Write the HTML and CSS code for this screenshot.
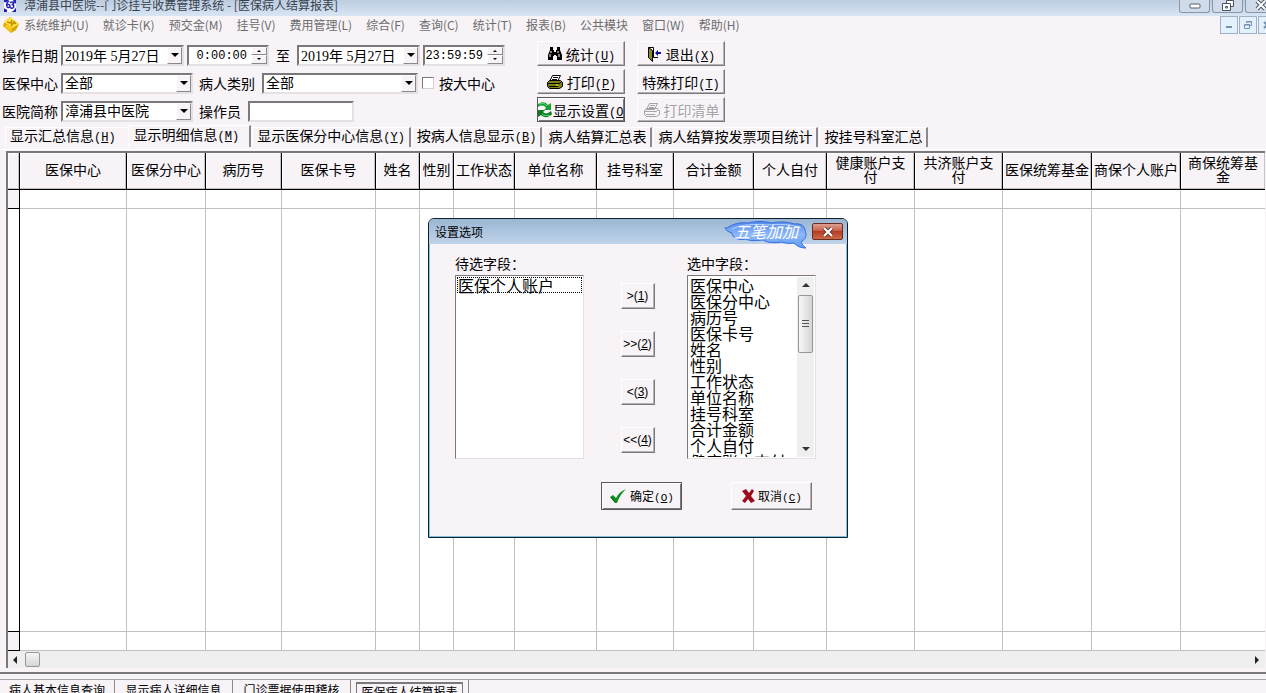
FILE: index.html
```html
<!DOCTYPE html>
<html lang="zh-CN">
<head>
  <meta charset="UTF-8">
  <meta name="viewport" content="width=device-width, initial-scale=1.0">
  <title>漳浦县中医院--门诊挂号收费管理系统</title>
  <link rel="stylesheet" href="styles.css">
</head>
<body>
  <div class="app">
    <header class="titlebar">
      <svg class="app-icon" width="16" height="16" viewBox="0 0 16 16">
        <rect width="16" height="16" fill="#fff"/>
        <path d="M0 0h6L4 3H0zM12 0h4v5l-3-2zM0 11l4 2v3H0zM16 10v6h-6l3-2z" fill="#2222b8"/>
        <path d="M7 1C4 3 3 6 4 9c1 2 4 1 4-1S5 5 4 7M8 4c1-2 5-2 5 0s-3 2-3 2 4 0 3 3-5 2-5 0" fill="none" stroke="#2222b8" stroke-width="2"/>
      </svg>
      <span class="titlebar-text">漳浦县中医院--门诊挂号收费管理系统 - [医保病人结算报表]</span>
      <div class="win-buttons">
        <button aria-label="最小化"><svg width="12" height="12" viewBox="0 0 12 12"><rect x="1" y="4" width="10" height="4" rx="1" fill="#fff" stroke="#555e6a"/></svg></button>
        <button aria-label="还原"><svg width="12" height="12" viewBox="0 0 12 12" fill="#fff" stroke="#4b5360"><path d="M4.500 0.500h7v6h-7z"/><path d="M.5 3.500h8v7h-8z"/><path d="M3.500 6.500h2v1.500h-2z"/></svg></button>
        <button aria-label="关闭"><svg width="12" height="12" viewBox="0 0 12 12"><path d="M2 1l8 8M10 1l-8 8" stroke="#4b5360" stroke-width="4"/><path d="M2 1l8 8M10 1l-8 8" stroke="#fff" stroke-width="2"/></svg></button>
      </div>
    </header>

    <nav class="menubar">
      <svg class="menu-icon" width="18" height="18" viewBox="0 0 18 18">
        <path d="M8 1l9 7-3 6-5 3-8-7 2-5z" fill="#d9a400"/>
        <path d="M8 1l9 7-7 4-8-6z" fill="#ffe34a"/>
        <path d="M5 6l4 1 1-3M9 10l3-4 2 2" fill="none" stroke="#c28a00" stroke-width="1.500"/>
        <path d="M2 11l3-3 5 4-1 5z" fill="#f7c61c"/>
      </svg>
      <a href="#">系统维护(U)</a>
      <a href="#">就诊卡(K)</a>
      <a href="#">预交金(M)</a>
      <a href="#">挂号(V)</a>
      <a href="#">费用管理(L)</a>
      <a href="#">综合(F)</a>
      <a href="#">查询(C)</a>
      <a href="#">统计(T)</a>
      <a href="#">报表(B)</a>
      <a href="#">公共模块</a>
      <a href="#">窗口(W)</a>
      <a href="#">帮助(H)</a>
      <div class="child-buttons">
        <button aria-label="最小化窗口"><svg width="10" height="10" viewBox="0 0 10 10"><path d="M2 7h6" stroke="#7592ae" stroke-width="2"/></svg></button>
        <button aria-label="还原窗口"><svg width="10" height="10" viewBox="0 0 10 10" fill="none" stroke="#7592ae"><path d="M3.500 3V1.500h5v4H7M1.500 4.500h5v4h-5zM3 2h6M1 5h6"/></svg></button>
        <button aria-label="关闭窗口"><svg width="10" height="10" viewBox="0 0 10 10"><path d="M2 2l6 6M8 2l-6 6" stroke="#7592ae" stroke-width="2"/></svg></button>
      </div>
    </nav>

    <section class="toolbar">
      <div class="filters">
        <div class="filter-row">
          <label class="row-label" for="dateFrom">操作日期</label>
          <div class="combo date">
            <input type="text" id="dateFrom" value="2019年 5月27日">
            <button class="drop" aria-label="选择开始日期"></button>
          </div>
          <div class="combo time">
            <input type="text" value="0:00:00" aria-label="开始时间">
            <div class="spin"><button aria-label="增加"></button><button aria-label="减少"></button></div>
          </div>
          <label class="to" for="dateTo">至</label>
          <div class="combo date">
            <input type="text" id="dateTo" value="2019年 5月27日">
            <button class="drop" aria-label="选择结束日期"></button>
          </div>
          <div class="combo time">
            <input type="text" value="23:59:59" aria-label="结束时间">
            <div class="spin"><button aria-label="增加"></button><button aria-label="减少"></button></div>
          </div>
        </div>
        <div class="filter-row">
          <label class="row-label" for="center">医保中心</label>
          <div class="combo medium">
            <select id="center"><option>全部</option></select>
            <span class="drop"></span>
          </div>
          <label class="second-label" for="ptype">病人类别</label>
          <div class="combo wide">
            <select id="ptype"><option>全部</option></select>
            <span class="drop"></span>
          </div>
          <input type="checkbox" id="bigCenter">
          <label for="bigCenter">按大中心</label>
        </div>
        <div class="filter-row">
          <label class="row-label" for="hospital">医院简称</label>
          <div class="combo medium">
            <select id="hospital"><option>漳浦县中医院</option></select>
            <span class="drop"></span>
          </div>
          <label class="second-label" for="operator">操作员</label>
          <div class="combo operator"><input type="text" id="operator"></div>
        </div>
      </div>

      <div class="actions">
        <button class="btn">
          <svg width="16" height="16" viewBox="0 0 16 16"><path d="M3 1h3v3h1v2h2V4h1V1h3v3l2 5v5h-5v-4H9V9H7v1H6v4H1V9l2-5z"/><path d="M4 5v2M3 8v3M11 5v2M12 8v3" stroke="#fff"/></svg>
          <span>统计<span class="key">(<u>U</u>)</span></span>
        </button>
        <button class="btn">
          <svg width="16" height="16" viewBox="0 0 16 16"><path d="M1.500 1.500h5v10h-5z" fill="#fff" stroke="#000"/><path d="M1.500 1.500l4 3v11l-4-4z" fill="#8c8c10" stroke="#000"/><path d="M7 11.500h4" stroke="#000"/><path d="M8 7l3-3v2h3v2h-3v2z" fill="#1010a0"/></svg>
          <span>退出<span class="key">(<u>X</u>)</span></span>
        </button>
        <button class="btn">
          <svg width="18" height="16" viewBox="0 0 18 16"><path d="M6.500 1.500h8l-3 6h-8z" fill="#fff" stroke="#000"/><path d="M7 3.500h5M6 5.500h5" stroke="#000"/><path d="M1.500 8.500l2-2h11l2 2v4l-3 2h-10l-2-2z" fill="#80801a" stroke="#000"/><path d="M2 9.500h11l3-2M3 12.500h9" fill="none" stroke="#000"/><path d="M10 11h2" stroke="#ff0"/></svg>
          <span>打印<span class="key">(<u>P</u>)</span></span>
        </button>
        <button class="btn"><span>特殊打印<span class="key">(<u>T</u>)</span></span></button>
        <button class="btn default settings">
          <svg width="14" height="18" viewBox="0 0 14 18"><path d="M0 3c4-3 8-2 10 1l3-2v7H6l2-2C6 4 3 4 0 6z" fill="#18a030"/><path d="M14 13c-3 4-8 4-11 1l-3 2V9h7l-2 2c2 2 5 2 8-1z" fill="#0b7b22"/><path d="M1 3c3-1 6-1 8 2M4 13c2 2 5 2 8 1" fill="none" stroke="#6be07c"/></svg>
          <span>显示设置<span class="key">(<u>O</u>)</span></span>
        </button>
        <button class="btn" disabled>
          <svg width="18" height="16" viewBox="0 0 18 16" fill="none" stroke="#a5a2a5"><path d="M6.500 1.500h8l-3 6h-8zM7 3.500h5M6 5.500h5M1.500 8.500l2-2h11l2 2v4l-3 2h-10l-2-2zM2 9.500h11l3-2M3 12.500h9"/></svg>
          <span>打印清单</span>
        </button>
      </div>
    </section>

    <div class="tabs" role="tablist">
      <button class="tab first" role="tab">显示汇总信息<span class="key">(<u>H</u>)</span></button>
      <button class="tab active" role="tab" aria-selected="true">显示明细信息<span class="key">(<u>M</u>)</span></button>
      <button class="tab" role="tab">显示医保分中心信息<span class="key">(<u>Y</u>)</span></button>
      <button class="tab" role="tab">按病人信息显示<span class="key">(<u>B</u>)</span></button>
      <button class="tab" role="tab">病人结算汇总表</button>
      <button class="tab" role="tab">病人结算按发票项目统计</button>
      <button class="tab" role="tab">按挂号科室汇总</button>
    </div>

    <main class="sheet">
      <div class="grid-frame">
        <div class="grid-body">
          <table class="grid">
            <colgroup>
              <col class="w-mark"><col class="w-center"><col class="w-sub"><col class="w-record"><col class="w-card">
              <col class="w-name"><col class="w-sex"><col class="w-status"><col class="w-unit"><col class="w-dept">
              <col class="w-total"><col class="w-self"><col class="w-account"><col class="w-account"><col class="w-fund"><col class="w-fund"><col>
            </colgroup>
            <thead>
              <tr>
                <th></th><th>医保中心</th><th>医保分中心</th><th>病历号</th><th>医保卡号</th><th>姓名</th><th>性别</th><th>工作状态</th><th>单位名称</th><th>挂号科室</th><th>合计金额</th><th>个人自付</th><th class="wrap">健康账户支付</th><th class="wrap">共济账户支付</th><th>医保统筹基金</th><th>商保个人账户</th><th class="wrap">商保统筹基金</th>
              </tr>
            </thead>
            <tbody>
              <tr class="line"><td></td><td></td><td></td><td></td><td></td><td></td><td></td><td></td><td></td><td></td><td></td><td></td><td></td><td></td><td></td><td></td><td></td></tr>
              <tr class="space"><td></td><td></td><td></td><td></td><td></td><td></td><td></td><td></td><td></td><td></td><td></td><td></td><td></td><td></td><td></td><td></td><td></td></tr>
              <tr class="line"><td></td><td></td><td></td><td></td><td></td><td></td><td></td><td></td><td></td><td></td><td></td><td></td><td></td><td></td><td></td><td></td><td></td></tr>
            </tbody>
          </table>
        </div>
        <div class="hscroll">
          <span class="arrow-left"></span>
          <span class="hthumb"></span>
          <span class="arrow-right"></span>
        </div>
      </div>
    </main>

    <footer class="windows">
      <button>病人基本信息查询</button>
      <button>显示病人详细信息</button>
      <button>门诊票据使用稽核</button>
      <button class="current"><span>医保病人结算报表</span></button>
    </footer>
  </div>

  <div class="dialog" role="dialog" aria-labelledby="dialogTitle">
    <div class="dialog-title">
      <span id="dialogTitle">设置选项</span>
      <svg class="ime" width="86" height="28" viewBox="0 0 86 28">
        <defs><linearGradient id="imeFill" x1="0" y1="0" x2="0" y2="1"><stop offset="0" stop-color="#5689e8"/><stop offset="0.500" stop-color="#8eb8fa"/><stop offset="1" stop-color="#5c9bf5"/></linearGradient></defs>
        <path d="M4 7C9 3 17 1 25 2c8-2 16-2 24 0 9-2 17-1 22 1 6-1 11 2 11 6 2 5 1 9-3 11-2 2 2 5 4 7-6 0-9-2-12-5-5 1-9 0-12-1-8 1-14 1-19-2-7 1-14 1-17-1-8 2-14-2-14-6-4-1-6-3-7-5 0-1 1 0 2 0z" fill="url(#imeFill)" stroke="#346ee0"/>
        <path d="M9 8c10-5 24-5 35-4 12-1 25-1 34 3" fill="none" stroke="#b6d2ff"/>
        <text class="ime-text" x="11" y="17">五笔加加</text>
      </svg>
      <button class="close" aria-label="关闭"><svg width="12" height="10" viewBox="0 0 12 10"><path d="M2 1l8 8M10 1L2 9" stroke="#6a4038" stroke-width="4"/><path d="M2 1l8 8M10 1L2 9" stroke="#fff" stroke-width="2"/></svg></button>
    </div>
    <div class="dialog-body">
      <div class="picker">
        <div class="picker-col">
          <label for="available">待选字段：</label>
          <div class="listbox">
            <select id="available" size="11"><option class="focused">医保个人账户</option></select>
          </div>
        </div>
        <div class="movers">
          <button class="btn">&gt;(<u>1</u>)</button>
          <button class="btn">&gt;&gt;(<u>2</u>)</button>
          <button class="btn">&lt;(<u>3</u>)</button>
          <button class="btn">&lt;&lt;(<u>4</u>)</button>
        </div>
        <div class="picker-col">
          <label for="chosen">选中字段：</label>
          <div class="listbox">
            <select id="chosen" size="11">
              <option>医保中心</option>
              <option>医保分中心</option>
              <option>病历号</option>
              <option>医保卡号</option>
              <option>姓名</option>
              <option>性别</option>
              <option>工作状态</option>
              <option>单位名称</option>
              <option>挂号科室</option>
              <option>合计金额</option>
              <option>个人自付</option>
              <option>健康账户支付</option>
            </select>
            <div class="vscroll">
              <span class="arrow-up"></span>
              <span class="vthumb"><i></i></span>
              <span class="arrow-down"></span>
            </div>
          </div>
        </div>
      </div>
      <div class="dialog-buttons">
        <button class="btn default">
          <svg width="18" height="16" viewBox="0 0 18 16"><path d="M1 9l3-2 3 3C9 6 12 3 17 1c-4 4-7 8-9 14H6z" fill="#109020"/><path d="M2 9l4 5" stroke="#066010"/></svg>
          <span>确定<span class="key">(<u>O</u>)</span></span>
        </button>
        <button class="btn">
          <svg width="14" height="16" viewBox="0 0 14 16"><path d="M1 3l4-2 3 4 3-4 2 2-3 5 4 5-4 2-3-4-3 4-3-2 4-5z" fill="#9c0d1c"/></svg>
          <span>取消<span class="key">(<u>C</u>)</span></span>
        </button>
      </div>
    </div>
  </div>
</body>
</html>
```

FILE: styles.css
```css
* {
  box-sizing: border-box;
}
body {
  margin: 0;
  overflow: hidden;
  background: #f7f3f7;
  color: #000;
  font-family: "Liberation Serif", "Noto Sans CJK SC", sans-serif;
  font-size: 14px;
}
button, input, select {
  margin: 0;
  padding: 0;
  border: none;
  border-radius: 0;
  background: none;
  color: inherit;
  font: inherit;
}
.app {
  display: flex;
  flex-direction: column;
  height: 100vh;
}
.key {
  font-family: "Liberation Mono", monospace;
  font-size: 12px;
}

/* title bar */
.titlebar {
  display: flex;
  flex: none;
  height: 16px;
  padding-left: 2px;
  background: linear-gradient(#bccde0, #d8e5f3);
  font-family: "Noto Sans CJK SC", sans-serif;
  font-size: 12px;
  color: #39424c;
}
.app-icon {
  height: 12px;
}
.titlebar-text {
  flex: 1;
  padding-left: 6px;
  line-height: 10px;
  white-space: nowrap;
}
.win-buttons {
  display: flex;
  gap: 2px;
  margin-right: -10px;
}
.win-buttons button {
  display: flex;
  justify-content: center;
  width: 31px;
  height: 13px;
  border: 1px solid #8896a8;
  border-top: none;
  border-radius: 0 0 3px 3px;
  background: #cfdbe9;
}

/* menu */
.menubar {
  display: flex;
  flex: none;
  align-items: center;
  gap: 14px;
  height: 18px;
  padding-left: 2px;
  font-family: "Noto Sans CJK SC", sans-serif;
  font-size: 12px;
  line-height: 18px;
}
.menubar a {
  color: #6d6d6d;
  text-decoration: none;
  white-space: nowrap;
}
.menu-icon {
  margin-right: -10px;
}
.child-buttons {
  display: flex;
  gap: 1px;
  margin: 0 -10px 0 auto;
}
.child-buttons button {
  display: flex;
  align-items: center;
  justify-content: center;
  width: 18px;
  height: 18px;
  border: 1px solid #9db2c6;
  background: #e3f1fc;
}

/* filters */
.toolbar {
  display: flex;
  flex: none;
  padding: 7px 0 0 2px;
}
.filters {
  width: 535px;
}
.filter-row {
  display: flex;
  align-items: center;
  height: 28px;
  white-space: nowrap;
}
.row-label {
  width: 59px;
}
.second-label {
  padding: 0 7px 0 6px;
}
.combo {
  display: flex;
  height: 21px;
  border: 2px solid;
  border-color: #7b787b #e4e0e4 #e4e0e4 #7b787b;
  background: #fff;
}
.combo input, .combo select {
  flex: 1;
  min-width: 0;
  padding-left: 2px;
  appearance: none;
  outline: none;
}
.date {
  width: 123px;
  margin-right: 3px;
}
.time {
  width: 82px;
}
.combo.time input {
  padding: 2px 4px 0 0;
  font-family: "Liberation Mono", monospace;
  font-size: 12px;
  text-align: right;
}
.to {
  padding: 0 7px;
}
.medium {
  width: 132px;
}
.wide {
  width: 156px;
}
.operator {
  width: 106px;
}
.drop {
  display: flex;
  align-items: center;
  justify-content: center;
  width: 15px;
  border: 1px solid;
  border-color: #fff #8c888c #8c888c #fff;
  background: #f7f3f7;
}
.drop::before {
  content: "";
  border: 4px solid transparent;
  border-top-color: #000;
  border-bottom: none;
}
.spin {
  display: flex;
  flex-direction: column;
  width: 16px;
}
.spin button {
  display: flex;
  flex: 1;
  align-items: center;
  justify-content: center;
  border: 1px solid;
  border-color: #fff #8c888c #8c888c #fff;
  background: #f7f3f7;
}
.spin button::before {
  content: "";
  border: 2px solid transparent;
  border-bottom-color: #000;
  border-top: none;
}
.spin button:last-child::before {
  border: 2px solid transparent;
  border-top-color: #000;
  border-bottom: none;
}
input[type="checkbox"] {
  width: 12px;
  height: 12px;
  margin: 0 5px 0 4px;
  appearance: none;
  border: 1px solid;
  border-color: #7b787b #d4d0d4 #d4d0d4 #7b787b;
  background: #fff;
}

/* buttons */
.btn {
  display: flex;
  align-items: center;
  justify-content: center;
  gap: 3px;
  border: 1px solid;
  border-color: #fff #7b787b #7b787b #fff;
  box-shadow: inset -1px -1px #b5b2b5;
  white-space: nowrap;
}
.btn svg {
  flex: none;
}
.btn:disabled {
  color: #a5a2a5;
  text-shadow: 1px 1px #fff;
}
.btn.default {
  border-color: #5a575a;
  box-shadow: inset 1px 1px #fff, inset -1px -1px #7b787b;
}
.actions {
  display: grid;
  grid-template-columns: 88px 88px;
  grid-auto-rows: 25px;
  gap: 3px 12px;
}
.btn.settings {
  justify-content: flex-start;
  gap: 1px;
  overflow: hidden;
}

/* page tabs */
.tabs {
  display: flex;
  flex: none;
  height: 24px;
  padding: 2px 0 0 5px;
}
.tab {
  height: 20px;
  margin-right: 1px;
  padding: 0 4px 0 4px;
  border-top: 1px solid #fff;
  border-left: 1px solid #fff;
  border-right: 2px solid #8c888c;
  line-height: 18px;
  white-space: nowrap;
}
.tab.first {
  padding-right: 11px;
  border-right: none;
}
.tab.active {
  height: 22px;
  margin-top: -2px;
  padding: 0 10px 0 5px;
}

/* data grid */
.sheet {
  display: flex;
  flex: 1;
  min-height: 0;
  padding: 1px 0 4px 6px;
  border-top: 1px solid #fff;
  border-bottom: 2px solid #7b787b;
}
.grid-frame {
  display: flex;
  flex: 1;
  flex-direction: column;
  margin-right: 1px;
  border-top: 2px solid #7b787b;
  border-left: 2px solid #7b787b;
  background: #fff;
}
.grid-body {
  flex: 1;
  min-height: 0;
}
.grid {
  width: 100%;
  height: 100%;
  table-layout: fixed;
  border-spacing: 0;
}
.grid th {
  height: 37px;
  padding: 0;
  border-right: 1px solid #000;
  border-bottom: 1px solid #000;
  background: #f7f3f7;
  box-shadow: inset -1px -1px #c6c3c6, inset 1px 1px #fff;
  font-weight: normal;
  line-height: 14px;
}
.grid th.wrap {
  padding: 0 6px;
}
.grid td {
  padding: 0;
  border-right: 1px solid #c0c0c0;
  border-bottom: 1px solid #c0c0c0;
}
.grid th:last-child, .grid td:last-child {
  border-right: none;
}
.grid td:first-child {
  border-right-color: #000;
  border-bottom-color: #000;
}
.line td {
  height: 19px;
}
.line td:first-child {
  background: #f7f3f7;
}
.w-mark { width: 12px; }
.w-center { width: 107px; }
.w-sub { width: 79px; }
.w-record { width: 76px; }
.w-card { width: 94px; }
.w-name { width: 44px; }
.w-sex { width: 34px; }
.w-status { width: 61px; }
.w-unit { width: 82px; }
.w-dept { width: 77px; }
.w-total { width: 80px; }
.w-self { width: 73px; }
.w-account { width: 88px; }
.w-fund { width: 89px; }
.hscroll {
  display: flex;
  align-items: center;
  height: 17px;
  padding: 0 6px 0 5px;
  background: #f0eff0;
}
.arrow-left, .arrow-right {
  border: 4px solid transparent;
}
.arrow-left {
  border-left: none;
  border-right-color: #222;
}
.arrow-right {
  margin-left: auto;
  border-right: none;
  border-left-color: #222;
}
.hthumb {
  width: 15px;
  height: 15px;
  margin-left: 8px;
  border: 1px solid #979797;
  border-radius: 2px;
  background: linear-gradient(#f6f6f6, #d5d5d5);
}

/* open windows */
.windows {
  display: flex;
  flex: none;
  height: 14px;
  margin-top: 5px;
  border-top: 1px solid #a5a2a5;
  overflow: hidden;
  font-family: "Noto Sans CJK SC", sans-serif;
  font-size: 12px;
  line-height: 18px;
}
.windows button {
  width: 118px;
  height: 20px;
  border-right: 1px solid #8c888c;
}
.windows button:first-child {
  width: 115px;
}
.windows .current {
  padding: 1px 5px 0;
}
.current span {
  display: block;
  border: 1px solid #7b787b;
  border-top-width: 2px;
  border-bottom: none;
  line-height: 16px;
}

/* settings dialog */
.dialog {
  position: absolute;
  left: 428px;
  top: 218px;
  width: 420px;
  border: 1px solid #10202c;
  border-radius: 6px 6px 0 0;
  background: #f7f3f7;
  box-shadow: inset 0 0 0 1px #7cc3dd;
}
.dialog-title {
  display: flex;
  align-items: center;
  height: 25px;
  padding: 0 4px 0 6px;
  border-radius: 5px 5px 0 0;
  background: linear-gradient(#9bb6d3, #bfd3e9);
  font-family: "Noto Sans CJK SC", sans-serif;
  font-size: 12px;
}
.ime {
  flex: none;
  margin: 6px 3px 0 auto;
}
.ime-text {
  fill: #fff;
  font-size: 16px;
  font-style: italic;
}
.close {
  display: flex;
  align-items: center;
  justify-content: center;
  width: 31px;
  height: 17px;
  border: 1px solid #6b2b25;
  border-radius: 2px;
  background: linear-gradient(#dda093, #c9604a 45%, #b53a22 50%, #cd6a48);
}
.dialog-body {
  padding: 10px 31px 27px 26px;
}
.picker {
  display: flex;
  justify-content: space-between;
}
.picker-col label {
  display: block;
  height: 21px;
  line-height: 21px;
}
.listbox {
  display: flex;
  width: 129px;
  height: 184px;
  padding: 1px;
  border: 1px solid;
  border-color: #7b787b #e4e0e4 #e4e0e4 #7b787b;
  background: #fff;
  font-size: 16px;
}
.listbox select {
  flex: 1;
  min-width: 0;
  height: 180px;
  outline: none;
  overflow: hidden;
}
.listbox option {
  display: flex;
  align-items: center;
  height: 16px;
  min-height: 16px;
  padding: 0 1px;
  line-height: 16px;
}
.listbox .focused {
  outline: 1px dotted #000;
  outline-offset: -1px;
}
.vscroll {
  display: flex;
  flex-direction: column;
  align-items: center;
  width: 17px;
  padding: 6px 0;
  background: #f0eff0;
}
.arrow-up, .arrow-down {
  border: 4px solid transparent;
}
.arrow-up {
  border-top: none;
  border-bottom-color: #333;
}
.arrow-down {
  margin-top: auto;
  border-bottom: none;
  border-top-color: #333;
}
.vthumb {
  display: flex;
  align-items: center;
  justify-content: center;
  width: 15px;
  height: 58px;
  margin-top: 8px;
  border: 1px solid #979797;
  border-radius: 2px;
  background: linear-gradient(90deg, #f6f6f6, #d5d5d5);
}
.vthumb i {
  width: 7px;
  height: 8px;
  background: repeating-linear-gradient(#555 0 1px, transparent 1px 3px);
}
.movers {
  display: flex;
  flex-direction: column;
  gap: 22px;
  padding: 29px 0 0 4px;
}
.movers .btn {
  gap: 0;
  width: 34px;
  height: 26px;
  font-family: "Liberation Sans", sans-serif;
  font-size: 12px;
}
.dialog-buttons {
  display: flex;
  justify-content: flex-end;
  gap: 49px;
  margin-top: 23px;
  padding-right: 4px;
}
.dialog-buttons .btn {
  width: 81px;
  height: 28px;
  font-size: 12px;
}
.dialog-buttons .key {
  font-size: 11px;
}
```
